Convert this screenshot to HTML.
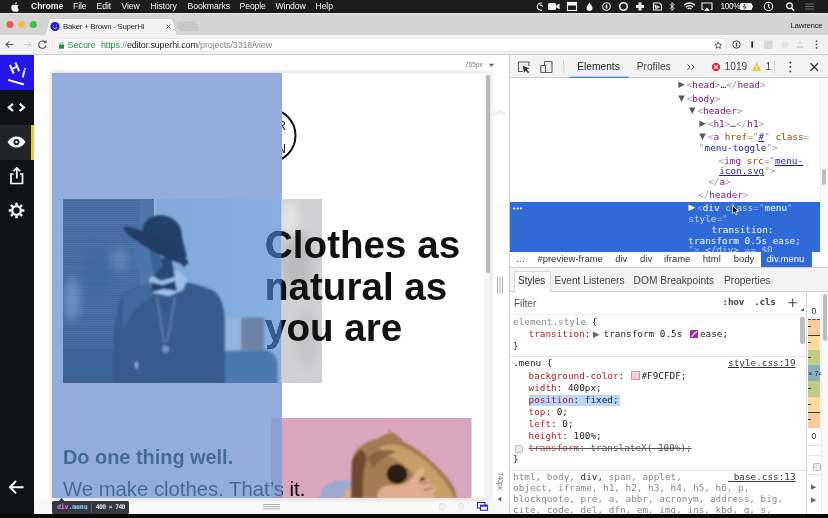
<!DOCTYPE html>
<html><head><meta charset="utf-8"><title>Baker + Brown - SuperHi</title>
<style>
*{box-sizing:border-box;margin:0;padding:0}
html,body{width:828px;height:518px;overflow:hidden;background:#fff;font-family:"Liberation Sans",sans-serif;}
.abs{position:absolute}
body>div{will-change:transform}
#menubar{position:absolute;left:0;top:0;width:828px;height:13px;background:#1c1c1c;color:#f4f4f4;font-size:8.700px;line-height:13px;white-space:nowrap;letter-spacing:-.12px}
#menubar span{position:absolute;top:0}
#tabstrip{position:absolute;left:0;top:13px;width:828px;height:22px;background:#d4d4d4;border-top:1px solid #e6e6e6}
#toolbar{position:absolute;left:0;top:35px;width:828px;height:20px;background:#f2f2f2;border-bottom:1px solid #d0d0d0}
#urlbar{position:absolute;left:54px;top:3px;width:672px;height:14px;background:#fff;border-radius:2px;border:1px solid #e6e6e6;font-size:8.950px;line-height:12px;white-space:nowrap}
#sidebar{position:absolute;left:0;top:55px;width:34px;height:460px;background:#111216}
#bottom{position:absolute;left:0;top:514px;width:828px;height:4px;background:#0a0a0a}
#preview{position:absolute;left:34px;top:55px;width:475px;height:459px;background:#fff;overflow:hidden}
#devtools{position:absolute;left:509px;top:55px;width:319px;height:459px;background:#fff;border-left:1px solid #cecece;overflow:hidden;font-size:9.5px}
.mono{font-family:"DejaVu Sans Mono","Liberation Mono",monospace}

.ui{font-size:10.200px;line-height:12px;white-space:nowrap}
.dom .ln,.st .ln{position:absolute;font-size:9.350px;line-height:11px;white-space:pre;color:#222}
.ln b{font-weight:normal}
.ln i{font-style:normal}
.ar{position:absolute;top:0;font-size:8.500px;color:#5a5a5a;font-family:"DejaVu Sans",sans-serif}
.ar.dn{font-size:8.500px}
.p{color:#a894a6}.t{color:#881280}.n{color:#994500}.v{color:#1a1aa6}.u{text-decoration:underline}
.sel{color:#fff !important}.sp{color:#8fb0e8}.sp2{color:#c4d5f3}
.r{color:#b81c1c}.g{color:#888 !important}.k{color:#222}
.bc span{position:absolute;top:198.300px;font-size:9.500px;line-height:11px;color:#333;white-space:nowrap}
</style></head><body>
<div id="menubar">
<svg class="abs" style="left:11px;top:1.5px" width="9" height="10" viewBox="0 0 18 20"><path fill="#f4f4f4" d="M13.2 10.6c0-2.3 1.9-3.4 2-3.5-1.1-1.6-2.8-1.8-3.4-1.8-1.4-.2-2.8.8-3.5.8s-1.900-.8-3.100-.800c-1.600 0-3.100.900-3.900 2.400-1.700 2.900-.4 7.200 1.200 9.500.8 1.200 1.700 2.400 3 2.400 1.200 0 1.700-.8 3.100-.8s1.900.8 3.100.8c1.300 0 2.100-1.200 2.900-2.300.9-1.300 1.300-2.600 1.300-2.700-.1 0-2.700-1-2.700-4zM10.800 3.600c.7-.8 1.100-1.900 1-3-1 0-2.100.6-2.800 1.400-.6.700-1.200 1.800-1 2.900 1.100.1 2.200-.5 2.800-1.300z"/></svg>
<span style="left:31px;font-weight:bold">Chrome</span>
<span style="left:73px">File</span>
<span style="left:96.500px">Edit</span>
<span style="left:121.500px">View</span>
<span style="left:150.500px">History</span>
<span style="left:187.500px">Bookmarks</span>
<span style="left:239.500px">People</span>
<span style="left:275.500px">Window</span>
<span style="left:315.500px">Help</span>
<svg class="abs" style="left:530px;top:0" width="298" height="13" viewBox="0 0 298 13" fill="none" stroke="#f0f0f0" stroke-width="1.100">
 <path d="M12 3.200a3.600 3.600 0 1 0 0 6.800M9.500 5.200a2 2 0 0 1 3 1.500"/>
 <rect x="18.500" y="3.500" width="7" height="6" rx="1" fill="#f0f0f0"/><path d="M26 6.500l3-2v4z" fill="#f0f0f0"/>
 <rect x="37.500" y="2.500" width="9" height="8" /><rect x="37.500" y="2.500" width="9" height="2.500" fill="#f0f0f0"/>
 <path d="M59.500 2.500c2 3 3 4 3 5.500a3 3 0 0 1-6 0c0-1.500 1-2.500 3-5.500z" fill="#f0f0f0" stroke="none"/>
 <circle cx="76.500" cy="6.500" r="3.800"/><path d="M76.500 4.500v4" stroke-width="1.600"/>
 <circle cx="93.500" cy="6.500" r="3.800" stroke-width="1.600"/>
 <path d="M108.500 2.500h3v2.500h2.500v3h-2.500v2.500h-3v-2.500h-2.500v-3h2.500z" fill="#f0f0f0" stroke="none"/>
 <path d="M123.500 3h6l2 2v5h-8z M125 5.500l4 1.500-3 1.500z"/>
 <path d="M140 4.200l4 4.300-2 2v-8l2 2-4 4.300" stroke-width=".9"/>
 <path d="M154 5.200a8 8 0 0 1 11 0M155.800 7.200a5.400 5.400 0 0 1 7.400 0M157.600 9a2.800 2.800 0 0 1 3.800 0" stroke-width="1.300"/>
 <path d="M173.500 9.500h-1.500v-6.500h10v6.500h-1.500"/><path d="M177 7.500l3 3.500h-6z" fill="#f0f0f0" stroke="none"/>
 <rect x="210.500" y="3.500" width="11" height="6" rx="1" fill="#e8e8e8"/><path d="M222.500 5.500v2" />
 <path d="M215 4l-1.500 3h2.500l-1.500 2.500" stroke="#1c1c1c" stroke-width=".8"/>
 <circle cx="238.500" cy="6.500" r="4.200"/><path d="M238.500 3.800v3l1.600 1.500"/>
 <circle cx="259.500" cy="5.800" r="2.800" stroke-width="1.300"/><path d="M261.500 8l2.500 2.700" stroke-width="1.500"/>
 <path d="M275 4h9M275 6.500h9M275 9h9" stroke="#6a6a6a" stroke-width="1"/>
</svg>
<span style="left:720.500px;font-size:8.200px;letter-spacing:-.3px">100%</span>
</div>
<div id="tabstrip">
 <svg class="abs" style="left:0;top:0" width="828" height="22" viewBox="0 0 828 22">
  <circle cx="10" cy="10.500" r="3.600" fill="#f05a52"/><circle cx="21.700" cy="10.500" r="3.600" fill="#f6b93a"/><circle cx="33.300" cy="10.500" r="3.600" fill="#3fc04a"/>
  <path d="M41 22c3.500 0 4.500-2 6-8l1.600-6.500c.6-2.300 1.400-3 3.400-3h118c2 0 2.800.7 3.400 3l1.600 6.500c1.500 6 2.500 8 6 8z" fill="#f2f2f2" stroke="#bdbdbd" stroke-width=".6"/>
  <path d="M179.500 8h14.500c1.200 0 1.800.4 2.200 1.600l1.600 5.400c.3 1-.2 1.500-1.200 1.500h-14.500c-1.200 0-1.800-.4-2.200-1.600l-1.600-5.400c-.3-1 .2-1.500 1.200-1.500z" fill="#c9c9c9" stroke="#b8b8b8" stroke-width=".5"/>
  <circle cx="55" cy="12.500" r="4.600" fill="#2419d6"/><path d="M53 13.200a2.200 2.200 0 0 0 4 0" stroke="#fff" stroke-width=".8" fill="none"/><circle cx="53.600" cy="11.300" r=".5" fill="#fff"/><circle cx="56.400" cy="11.300" r=".5" fill="#fff"/>
  <path d="M166.500 10.500l4 4m0-4l-4 4" stroke="#5a5a5a" stroke-width=".9"/>
 </svg>
 <span class="abs" style="left:63px;top:6.500px;font-size:7.900px;line-height:11px;color:#2a2a2a;white-space:nowrap;letter-spacing:-.28px">Baker + Brown - SuperHi</span>
 <span class="abs" style="left:790.500px;top:5.500px;font-size:7.900px;line-height:11px;color:#222;white-space:nowrap;letter-spacing:-.28px">Lawrence</span>
</div>
<div id="toolbar">
 <svg class="abs" style="left:0;top:0" width="54" height="20" viewBox="0 0 54 20" fill="none">
  <path d="M13.500 9.500h-7.500m3.200-3.200l-3.200 3.200 3.200 3.200" stroke="#5a5a5a" stroke-width="1.100"/>
  <path d="M23.500 9.500h7.500m-3.200-3.200l3.200 3.200-3.200 3.200" stroke="#d0d0d0" stroke-width="1.100"/>
  <path d="M45.200 7.200a3.700 3.700 0 1 0 .8 3.300" stroke="#5a5a5a" stroke-width="1.100"/><path d="M46.500 5v3.200h-3.200z" fill="#5a5a5a"/>
 </svg>
 <div id="urlbar">
  <svg class="abs" style="left:3.500px;top:2.500px" width="5.200" height="7" viewBox="0 0 6 8"><rect x="0" y="3.200" width="6" height="4.600" rx=".6" fill="#1e8e3e"/><path d="M1.300 3.500v-1.200a1.700 1.700 0 0 1 3.400 0v1.200" stroke="#1e8e3e" stroke-width=".9" fill="none"/></svg>
  <span class="abs" style="left:12.500px;top:0;color:#1e8e3e">Secure</span>
  <span class="abs" style="left:46px;top:0;letter-spacing:-.12px"><span style="color:#1e8e3e">https</span><span style="color:#888">://</span><span style="color:#222">editor.superhi.com</span><span style="color:#888">/projects/3318/view</span></span>
  <svg class="abs" style="left:658.500px;top:2.200px" width="8.500" height="8.500" viewBox="0 0 11 11"><path d="M5.500 1.200l1.300 2.900 3.100.3-2.300 2.100.7 3.100-2.800-1.600-2.800 1.600.7-3.100-2.300-2.100 3.100-.3z" fill="none" stroke="#444" stroke-width="1.100"/></svg>
 </div>
 <svg class="abs" style="left:728px;top:0" width="100" height="20" viewBox="0 0 100 20" fill="none">
  <circle cx="8.500" cy="9.500" r="3.700" stroke="#444" stroke-width="1"/><path d="M8.500 7.500v4" stroke="#444" stroke-width="1.200"/>
  <rect x="23.300" y="6.300" width="1.800" height="6.400" rx=".9" fill="#222"/>
  <rect x="36" y="5.500" width="8.500" height="8.500" fill="#d9d9d9"/>
  <circle cx="57" cy="9.500" r="3.500" fill="#e4e4e4"/>
  <path d="M69 11h6v2h-6z M72 6l2.500 3h-5z" fill="#dcdcdc"/>
  <circle cx="88.500" cy="6.200" r=".9" fill="#555"/><circle cx="88.500" cy="9.500" r=".9" fill="#555"/><circle cx="88.500" cy="12.800" r=".9" fill="#555"/>
 </svg>
</div>
<div id="sidebar">
 <div class="abs" style="left:0;top:0;width:34px;height:34.500px;background:#2216e8"></div>
 <svg class="abs" style="left:0;top:0" width="34" height="35" viewBox="0 0 34 35">
  <text x="14.500" y="17.600" text-anchor="middle" transform="rotate(-24 14.500 12.800)" font-family="Liberation Sans, sans-serif" font-weight="bold" font-size="13.500" fill="#fff">H</text>
  <text x="24" y="22.400" text-anchor="middle" transform="rotate(15 24 17.800)" font-family="Liberation Sans, sans-serif" font-weight="bold" font-size="13" fill="#fff">i</text>
  <path d="M8.800 25.100l14.400 4.100" stroke="#fff" stroke-width="2" stroke-linecap="round" fill="none"/>
 </svg>
 <svg class="abs" style="left:0;top:35px" width="34" height="35" viewBox="0 0 34 35" fill="none" stroke="#fff" stroke-width="2.200" >
  <path d="M13 13.800l-4.200 3.600 4.200 3.600M19.800 13.800l4.200 3.600-4.200 3.600"/>
 </svg>
 <div class="abs" style="left:0;top:70px;width:34px;height:35px;background:#22232b"></div>
 <div class="abs" style="left:31px;top:70px;width:3px;height:35px;background:#f2c230"></div>
 <svg class="abs" style="left:0;top:70px" width="34" height="35" viewBox="0 0 34 35" fill="none">
  <path d="M7.500 17c2.500-3.700 5.500-5.500 9-5.500s6.500 1.800 9 5.500c-2.500 3.700-5.500 5.500-9 5.500s-6.500-1.800-9-5.500z" fill="#fff"/>
  <circle cx="16.500" cy="17" r="3.100" fill="#22232b"/><circle cx="16.500" cy="17" r="1.200" fill="#fff"/>
 </svg>
 <svg class="abs" style="left:0;top:104px" width="34" height="35" viewBox="0 0 34 35" fill="none" stroke="#fff" stroke-width="1.700">
  <path d="M13.500 15h-2.500v9.500h11.500v-9.500h-2.500M16.800 19.500v-10.500M13.500 12.200l3.300-3.300 3.300 3.300"/>
 </svg>
 <svg class="abs" style="left:0;top:138px" width="34" height="35" viewBox="0 0 34 35" fill="none">
  <g transform="translate(16.500 17.500)" stroke="#fff">
   <circle r="4.300" stroke-width="2.300"/>
   <g stroke-width="2.400"><path d="M0-7.800v2.600M0 7.800v-2.600M-7.800 0h2.600M7.800 0h-2.600M-5.500-5.500l1.800 1.800M5.500 5.500l-1.800-1.800M-5.500 5.500l1.800-1.800M5.500-5.500l-1.800 1.800"/></g>
  </g>
 </svg>
 <svg class="abs" style="left:0;top:415px" width="34" height="35" viewBox="0 0 34 35" fill="none" stroke="#fff" stroke-width="2">
  <path d="M23.500 17.200h-13M16 11l-6 6.200 6 6.200"/>
 </svg>
</div>
<div id="preview">
 <!-- coords relative to (34,55) -->
 <span class="abs" style="left:431px;top:5.500px;font-size:6.500px;line-height:8px;color:#7d7d7d;white-space:nowrap">765px</span>
 <svg class="abs" style="left:454px;top:7.500px" width="7" height="5" viewBox="0 0 7 5"><path d="M.8.800h5.400l-2.700 3.200z" fill="#666"/></svg>
 <div class="abs" id="frame" style="left:18px;top:17.500px;width:438px;height:425px;background:#fff;box-shadow:0 0 5px rgba(0,0,0,.22);overflow:hidden">
  <!-- frame coords: origin (52,72.500) -->
  <!-- logo circle -->
  <svg class="abs" style="left:187px;top:31.500px" width="60" height="60" viewBox="0 0 60 60"><circle cx="30" cy="31.500" r="26.500" fill="#fff" stroke="#111" stroke-width="2"/>
   <text x="38" y="25.500" font-family="Liberation Sans, sans-serif" font-size="12.500" fill="#222">R</text>
   <text x="38" y="49" font-family="Liberation Sans, sans-serif" font-size="12.500" fill="#222">N</text>
   <text x="5" y="25" font-family="Liberation Sans, sans-serif" font-size="11" fill="#222">BAKE</text>
   <text x="26" y="36" font-family="Liberation Sans, sans-serif" font-size="9" fill="#222">+</text>
   <text x="3" y="48" font-family="Liberation Sans, sans-serif" font-size="11" fill="#222">BRO</text>
  </svg>
  <div class="abs" style="left:0;top:0;width:229.500px;height:425px;background:#f1c3d2"></div>
  <!-- pink photo: x 271..471.500 , y 418..498 -->
  <svg class="abs" style="left:219px;top:345.500px" width="200.500" height="80" viewBox="0 0 200.500 80">
   <defs><filter id="b2" x="-20%" y="-20%" width="140%" height="140%"><feGaussianBlur stdDeviation="1.100"/></filter>
   <pattern id="chk" width="3" height="3" patternUnits="userSpaceOnUse"><rect width="3" height="3" fill="#dfe5f3"/><rect width="1.500" height="3" fill="#6f86bd"/><rect width="3" height="1.200" fill="#5e76b0" opacity=".7"/></pattern></defs>
   <rect width="200.500" height="80" fill="#dca5be"/>
   <g filter="url(#b2)">
    <path d="M48 80l5-12 14-6 14 2 2 16z" fill="url(#chk)"/>
    <path d="M72 80l4-10 8-2v12z" fill="#d9a98a"/>
    <path d="M80 80L81 42c2-7 5-11 9-14 5-4 11-6 17-7.500 4-3 8-5 12-5l-3-5 6 5c4 1 7 4 10.400 8.200 5 2 10 5 14.400 8.300 5 3.500 10 7.500 14.200 12 4.500 4 9 8 12.500 12.500 4 4.500 8 9.500 10.200 14.500l2 9z" fill="#a57a52"/>
    <path d="M108 30c10-6 22-4 34 4 12 8 24 18 32 30 4 6 8 12 9 16h-30c-2-14-10-26-22-34-8-6-16-10-23-16z" fill="#c99d68"/>
    <path d="M80 80L81 44c2-6 5-10 9-12 4 2 6 6 5 12-3 10-4 22-3 36z" fill="#6f4a2e"/>
    <path d="M96 40c8-8 20-10 30-6-10 2-18 8-24 16z" fill="#8a623f"/>
    <ellipse cx="126" cy="56" rx="10.500" ry="10" fill="#2b1b14"/>
    <path d="M146 58l8 2 2 6-6 4-6-5z" fill="#3a261c"/>
    <path d="M106 80c0-8 6-13 14-13 6 1 12 0 18-4l10-12c3-3 6-1 5 3l-5 10 8-3c4 0 4 4 1 6l6 1c3 2 2 6-1 7l2 5z" fill="#e0ae8c"/>
    <path d="M150 66l8-2M152 72l10-2" stroke="#7a4c36" stroke-width="1.200" fill="none"/>
   </g>
  </svg>
  <!-- text -->
  <div class="abs" style="left:11px;top:372px;font-weight:bold;font-size:19.900px;line-height:24px;color:#050505;white-space:nowrap">Do one thing well.</div>
  <div class="abs" style="left:11px;top:404.500px;font-size:20.300px;line-height:24px;color:#050505;white-space:nowrap">We make clothes. That’s it.</div>
  <!-- devtools highlight overlay -->
  <div class="abs" style="left:0;top:0;width:229.500px;height:425px;background:rgba(100,160,225,.66)"></div>
  <!-- man photo (final colours) : x 63..322 , y 198.700..383.500 -->
  <svg class="abs" style="left:11px;top:126.200px" width="259" height="184.800" viewBox="0 0 259 184.800">
   <defs>
    <filter id="b1" x="-20%" y="-20%" width="140%" height="140%"><feGaussianBlur stdDeviation=".9"/></filter>
    <filter id="b3" x="-30%" y="-30%" width="160%" height="160%"><feGaussianBlur stdDeviation="5"/></filter>
    <linearGradient id="wall" x1="0" x2="1"><stop offset="0" stop-color="#7ea8d9"/><stop offset="1" stop-color="#86aede"/></linearGradient>
    <linearGradient id="win" x1="0" y1="0" x2="0" y2="1"><stop offset="0" stop-color="#42699d"/><stop offset=".6" stop-color="#40679a"/><stop offset="1" stop-color="#3b6193"/></linearGradient>
    <pattern id="blinds" width="4" height="2.200" patternUnits="userSpaceOnUse"><rect width="4" height="1" fill="#6b97c8" opacity=".3"/></pattern>
    <clipPath id="cl"><rect x="0" y="0" width="218.500" height="184.800"/></clipPath>
   </defs>
   <rect width="259" height="184.800" fill="#d0d0d3"/>
   <ellipse cx="234" cy="62" rx="16" ry="30" fill="#bcbcbe" filter="url(#b3)"/>
   <ellipse cx="244" cy="140" rx="12" ry="30" fill="#c6c6c8" filter="url(#b3)"/>
   <ellipse cx="226" cy="20" rx="10" ry="18" fill="#e2e2e2" filter="url(#b3)"/>
   <g clip-path="url(#cl)">
    <rect width="218.500" height="184.800" fill="url(#wall)"/>
    <rect x="0" y="0" width="78" height="184.800" fill="url(#win)"/>
    <rect x="0" y="0" width="78" height="150" fill="url(#blinds)"/>
    <ellipse cx="56" cy="60" rx="9" ry="11" fill="#86add6" opacity=".4" filter="url(#b3)"/>
    <ellipse cx="9" cy="100" rx="8" ry="22" fill="#86b0dc" opacity=".55" filter="url(#b3)"/>
    <ellipse cx="34" cy="75" rx="14" ry="30" fill="#3e6a9e" opacity=".55" filter="url(#b3)"/>
    <rect x="77" y="0" width="14.500" height="184.800" fill="#4d77a9"/>
    <rect x="91" y="0" width="1.600" height="184.800" fill="#93b8e2"/>
    <rect x="0" y="150" width="77" height="34.800" fill="#41699a" opacity=".3"/>
    <g filter="url(#b1)">
     <path d="M159 151.500h46c5 2 8 6 9.500 12v22h-55.500z" fill="#4b78ad"/>
     <rect x="160" y="118.500" width="19" height="33" fill="#93b4dc"/>
     <rect x="178" y="118.500" width="23" height="33" fill="#6d82a8"/>
     <!-- body -->
     <path d="M50 185V146c1-20 4-38 10-50 6-6 16-9 28-12l30-2c14 3 26 6 33 10 8 6 11 20 11 32v61z" fill="#365d8e"/>
     <path d="M60 97c6-6 16-9 27-12l3 12c-10 6-20 12-30 34z" fill="#456e9f" opacity=".8"/>
     <!-- collar -->
     <path d="M86 80l6-6 24-2 8 9-4 10-14 6-16-3z" fill="#9dc0ea"/>
     <!-- neck shadow -->
     <path d="M86 60l22-2 4 20-14 4-10-6z" fill="#284a78"/>
     <!-- bow tie -->
     <path d="M88 83l11 3 13-4 2 10-13-2-12 3z" fill="#23426f"/>
     <!-- face -->
     <path d="M72 42c6-2 16-2 22 2l4 20-6 12-12 0-6-6-2-8-3-5 3-5z" fill="#4a76a8"/>
     <path d="M86 44l8 0 6 22-8 10-4-14z" fill="#3a6294"/>
     <!-- hat -->
     <ellipse cx="99" cy="34" rx="20" ry="17.500" transform="rotate(18 99 34)" fill="#223f6b"/>
     <path d="M80 30l36-4 8 32-12 2-22-14z" fill="#223f6b"/>
     <ellipse cx="93" cy="46.500" rx="37" ry="6.500" transform="rotate(29 93 46.500)" fill="#213d68"/>
     <path d="M118 50l6 12-3 7-6-9z" fill="#213d68"/>
     <!-- chain -->
     <path d="M94 98l7 46M112 98l-8 46" stroke="#7fa3cf" stroke-width=".8" fill="none"/>
     <circle cx="102.500" cy="150" r="3.600" fill="#7196c4"/>
     <rect x="72" y="163" width="3" height="6" fill="#86aad4"/>
    </g>
   </g>
  </svg>
  <div class="abs" style="left:213px;top:151.500px;font-weight:bold;font-size:38.600px;line-height:41.600px;color:#111;letter-spacing:0;white-space:nowrap">Clothes as<br>natural as<br>you are</div>
  <div class="abs" style="left:213px;top:151.500px;font-weight:bold;font-size:38.600px;line-height:41.600px;color:#345c92;clip-path:inset(0 calc(100% - 16.500px) 0 0);letter-spacing:0;white-space:nowrap">Clothes as<br>natural as<br>you are</div>
  <!-- scrollbar -->
  <div class="abs" style="left:432px;top:0;width:6px;height:425px;background:#f4f4f4"></div>
  <div class="abs" style="left:433.500px;top:2.500px;width:4.500px;height:198px;background:#b9b9b9;border-radius:2px"></div>
 </div>
 <span class="abs" style="left:459px;top:53.500px;font-size:6px;line-height:8px;color:#cfcfcf;white-space:nowrap">] iPa</span>
 <svg class="abs" style="left:462px;top:220px" width="8" height="20" viewBox="0 0 8 20"><path d="M1.500 1.500v17M4 1.500v17M6.500 1.500v17" stroke="#9a9a9a" stroke-width=".8"/></svg>
 <span class="abs" style="left:456px;top:422px;width:20px;font-size:6.500px;line-height:8px;color:#666;white-space:nowrap;transform:rotate(90deg);transform-origin:center;text-align:center">740px</span>
 <svg class="abs" style="left:462.500px;top:440.500px" width="5" height="6" viewBox="0 0 5 6"><path d="M4.200.8v4.400l-3.400-2.200z" fill="#555"/></svg>
 <!-- bottom bar -->
 <div class="abs" style="left:0;top:444px;width:475px;height:15px;background:#f8f8f8;z-index:-1"></div>
 <svg class="abs" style="left:228px;top:448px" width="20" height="8" viewBox="0 0 20 8"><path d="M1 1.500h17M1 3.700h17M1 5.900h17" stroke="#9a9a9a" stroke-width=".8"/></svg>
 <svg class="abs" style="left:400px;top:445px" width="60" height="13" viewBox="0 0 60 13" fill="none">
  <circle cx="8" cy="6.500" r="3" stroke="#dedede" stroke-width="1"/><path d="M8 4.800v2" stroke="#dedede" stroke-width=".8"/>
  <circle cx="27" cy="6.500" r="3" stroke="#e6e6e6" stroke-width="1"/><path d="M26.200 5v3M27.800 5v3" stroke="#e2e2e2" stroke-width=".8"/>
  <rect x="43.500" y="2.500" width="7.500" height="5.500" stroke="#2a2ab8" stroke-width="1.100"/><rect x="46.500" y="5.200" width="7" height="5" fill="#fff" stroke="#2a2ab8" stroke-width="1.100"/><rect x="46.500" y="5.200" width="7" height="1.500" fill="#2a2ab8"/>
 </svg>
 <!-- tooltip -->
 <div class="abs" style="left:18px;top:446.300px;width:77px;height:12.700px;background:#333842;border-radius:1.500px"></div>
 <svg class="abs" style="left:23px;top:441.500px" width="10" height="6" viewBox="0 0 10 6"><path d="M0 6l4.500-5 4.500 5z" fill="#333842"/></svg>
 <span class="abs mono" style="left:23px;top:448.300px;font-size:6.700px;line-height:9px;white-space:nowrap;font-weight:bold;letter-spacing:-.22px"><span style="color:#ee78e6">div</span><span style="color:#8ed3fb">.menu</span></span>
 <span class="abs" style="left:57.300px;top:448px;width:1px;height:9.500px;background:#5a5f6a"></span>
 <span class="abs mono" style="left:61.800px;top:448.300px;font-size:6.400px;line-height:9px;color:#dcdcdc;white-space:nowrap;font-weight:bold;letter-spacing:-.62px">400 × 740</span>
</div>
<div id="devtools">
 <!-- origin (510,55) -->
 <div class="abs" style="left:0;top:0;width:318px;height:23px;background:#f3f3f3;border-bottom:1px solid #cdcdcd"></div>
 <svg class="abs" style="left:0;top:0" width="318" height="23" viewBox="0 0 318 23" fill="none">
  <path d="M13 16.500h-4.500v-9.500h10.500v4" stroke="#5a5a5a" stroke-width="1.100"/><path d="M12.800 10.800l6.800 2.600-2.800 1.200 2.300 2.700-1.100.9-2.300-2.700-1.600 2.400z" fill="#333"/>
  <rect x="34.500" y="6.500" width="7.500" height="11" rx=".8" stroke="#5a5a5a" stroke-width="1.100"/><rect x="30.800" y="10.500" width="4.800" height="7" rx=".6" fill="#f3f3f3" stroke="#5a5a5a" stroke-width="1.100"/>
  <path d="M53.500 5v13" stroke="#cfcfcf" stroke-width="1"/>
  <rect x="59.300" y="21.700" width="59.500" height="1.500" fill="#3e82e5"/>
  <path d="M177.500 9.500l2.600 2.600-2.600 2.600M181.500 9.500l2.600 2.600-2.600 2.600" stroke="#444" stroke-width="1"/>
  <circle cx="206" cy="12" r="4.200" fill="#e0353c"/><path d="M204.300 10.300l3.400 3.400m0-3.400l-3.400 3.400" stroke="#fff" stroke-width="1.100"/>
  <path d="M246.700 7.200l4.700 8.500h-9.400z" fill="#f3c52c"/><path d="M246.700 10v3.200M246.700 14v1" stroke="#fff" stroke-width="1"/>
  <path d="M264.500 5v13" stroke="#d4d4d4" stroke-width="1"/>
  <circle cx="280.300" cy="7.500" r="1" fill="#444"/><circle cx="280.300" cy="12" r="1" fill="#444"/><circle cx="280.300" cy="16.500" r="1" fill="#444"/>
  <path d="M300.500 8.300l7.400 7.400m0-7.400l-7.400 7.400" stroke="#333" stroke-width="1.300"/>
 </svg>
 <span class="abs ui" style="left:67.300px;top:6px;color:#222">Elements</span>
 <span class="abs ui" style="left:126.700px;top:6px;color:#444">Profiles</span>
 <span class="abs ui" style="left:214.600px;top:6px;color:#444">1019</span>
 <span class="abs ui" style="left:255.500px;top:6px;color:#444">1</span>

 <!-- DOM tree -->
 <div class="abs" style="left:0;top:147.400px;width:310px;height:49.800px;background:#2f6ad6"></div>
 <div class="dom mono">
  <span class="ln" style="left:176.700px;top:24.2px"><i class="ar" style="left:-8.500px">▶</i><b class="p">&lt;</b><b class="t">head</b><b class="p">&gt;</b>…<b class="p">&lt;/</b><b class="t">head</b><b class="p">&gt;</b></span>
  <span class="ln" style="left:176.700px;top:37.7px"><i class="ar dn" style="left:-8.500px">▼</i><b class="p">&lt;</b><b class="t">body</b><b class="p">&gt;</b></span>
  <span class="ln" style="left:187.400px;top:50.3px"><i class="ar dn" style="left:-8.500px">▼</i><b class="p">&lt;</b><b class="t">header</b><b class="p">&gt;</b></span>
  <span class="ln" style="left:197.800px;top:63.4px"><i class="ar" style="left:-8.500px">▶</i><b class="p">&lt;</b><b class="t">h1</b><b class="p">&gt;</b>…<b class="p">&lt;/</b><b class="t">h1</b><b class="p">&gt;</b></span>
  <span class="ln" style="left:197.800px;top:76.4px"><i class="ar dn" style="left:-8.500px">▼</i><b class="p">&lt;</b><b class="t">a</b> <b class="n">href</b><b class="p">="</b><b class="v u">#</b><b class="p">"</b> <b class="n">class</b><b class="p">=</b></span>
  <span class="ln" style="left:188.900px;top:87.4px"><b class="p">"</b><b class="v">menu-toggle</b><b class="p">"&gt;</b></span>
  <span class="ln" style="left:208.600px;top:99.5px"><b class="p">&lt;</b><b class="t">img</b> <b class="n">src</b><b class="p">="</b><b class="v u">menu-</b></span>
  <span class="ln" style="left:209.200px;top:110.2px"><b class="v u">icon.svg</b><b class="p">"&gt;</b></span>
  <span class="ln" style="left:198.200px;top:121px"><b class="p">&lt;/</b><b class="t">a</b><b class="p">&gt;</b></span>
  <span class="ln" style="left:188px;top:133.8px"><b class="p">&lt;/</b><b class="t">header</b><b class="p">&gt;</b></span>
  <span class="ln sel" style="left:187px;top:146.8px"><i class="ar" style="left:-8.500px;color:#fff">▶</i><b class="sp">&lt;</b>div <b class="sp2">class</b><b class="sp">="</b>menu<b class="sp">"</b></span>
  <span class="ln sel" style="left:178.300px;top:158.1px"><b class="sp2">style</b><b class="sp">="</b></span>
  <span class="ln sel" style="left:201.500px;top:169.1px">transition:</span>
  <span class="ln sel" style="left:178.300px;top:179.8px">transform 0.5s ease;</span>
  <span class="ln sel" style="left:178.300px;top:188.8px"><b class="sp">"&gt;</b><b class="sp2">…&lt;/div&gt; == $0</b></span>
  <span class="ln sel" style="left:2px;top:149.300px;letter-spacing:-.8px;color:#dbe6fa;font-size:7px">•••</span>
 </div>
<svg class="abs" style="left:221.500px;top:149.500px" width="8" height="11" viewBox="0 0 8 11"><path d="M.6.600v8.200l2-1.800 1.300 3 1.300-.6-1.300-2.900h2.700z" fill="#111" stroke="#fff" stroke-width=".7"/></svg>
 <!-- DOM scrollbar -->
 <div class="abs" style="left:310px;top:24px;width:8px;height:173px;background:#fafafa;border-left:1px solid #ededed"></div>
 <div class="abs" style="left:312px;top:114px;width:4px;height:15.500px;background:#bdbdbd;border-radius:2px"></div>

 <!-- breadcrumbs -->
 <div class="abs" style="left:0;top:197px;width:318px;height:16px;background:#fff;border-bottom:1px solid #cfcfcf"></div>
 <div class="abs" style="left:251px;top:197px;width:51px;height:15px;background:#2f6ad6"></div>
 <div class="bc">
  <span style="left:6px;letter-spacing:.3px">...</span>
  <span style="left:27.400px">#preview-frame</span>
  <span style="left:105.200px">div</span>
  <span style="left:130px">div</span>
  <span style="left:154px">iframe</span>
  <span style="left:192.800px">html</span>
  <span style="left:223.700px">body</span>
  <span style="left:256.500px;color:#fff">div.menu</span>
 </div>
 <!-- styles tabs -->
 <div class="abs" style="left:0;top:213px;width:318px;height:24px;background:#f3f3f3;border-bottom:1px solid #cdcdcd"></div>
 <div class="abs" style="left:3.500px;top:216px;width:37px;height:21px;background:#fff;border:1px solid #dadada;border-bottom:none"></div>
 <span class="abs ui" style="left:8px;top:220px;color:#222;font-size:10px">Styles</span>
 <span class="abs ui" style="left:44.400px;top:220px;color:#444">Event Listeners</span>
 <span class="abs ui" style="left:123.600px;top:220px;color:#444">DOM Breakpoints</span>
 <span class="abs ui" style="left:214px;top:220px;color:#444">Properties</span>
 <!-- filter row -->
 <div class="abs" style="left:0;top:258.500px;width:296px;height:1px;background:#f0f0f0"></div>
 <span class="abs ui" style="left:4px;top:242.500px;color:#555;font-size:10px">Filter</span>
 <span class="abs mono" style="left:212.500px;top:241.300px;font-size:9.350px;line-height:11px;color:#444;font-weight:bold;white-space:nowrap;letter-spacing:-.2px">:hov</span>
 <span class="abs mono" style="left:244px;top:241.300px;font-size:9.350px;line-height:11px;color:#444;font-weight:bold;white-space:nowrap;letter-spacing:-.2px">.cls</span>
 <svg class="abs" style="left:277px;top:242px" width="18" height="16" viewBox="0 0 18 16"><path d="M5.700 1.500v8.400M1.500 5.700h8.400" stroke="#444" stroke-width="1.100"/><path d="M17 10.800v3.300h-3.300z" fill="#555"/></svg>
 <!-- styles scrollbar -->
 <div class="abs" style="left:290.300px;top:262px;width:4.500px;height:27px;background:#bdbdbd;border-radius:2px"></div>
 <!-- sidebar split -->
 <div class="abs" style="left:295.800px;top:238px;width:1px;height:221px;background:#d6d6d6"></div>

 <!-- Styles content -->
 <div class="abs" style="left:0;top:300.500px;width:296px;height:1px;background:#e4e4e4"></div>
 <div class="abs" style="left:0;top:414.500px;width:296px;height:1px;background:#e4e4e4"></div>
 <div class="abs" style="left:18.600px;top:340px;width:91.500px;height:10.500px;background:#b9d6fb"></div>
 <div class="st mono">
  <span class="ln g" style="left:3px;top:260.7px">element.style <b class="k">{</b></span>
  <span class="ln" style="left:18.600px;top:273px"><b class="r">transition</b>:<i class="ar" style="position:static;color:#666;font-size:8.500px;margin:0 4px 0 2.500px">▶</i>transform 0.5s <svg width="8.500" height="8.500" viewBox="0 0 9 9" style="vertical-align:-1px;margin:0 1.500px 0 2px"><rect width="9" height="9" rx="1" fill="#9c27b0"/><path d="M1.500 7c2.500 0 1.500-4.500 6-5" stroke="#fff" stroke-width="1.200" fill="none"/></svg>ease;</span>
  <span class="ln" style="left:3px;top:284.5px">}</span>
  <span class="ln" style="left:3px;top:302.1px">.menu {</span>
  <span class="ln u" style="left:218px;top:302.1px;color:#333">style.css:19</span>
  <span class="ln" style="left:18.600px;top:314.5px"><b class="r">background-color</b>: <i style="display:inline-block;width:9px;height:9px;background:#F9CFDF;border:1px solid #b9a0a8;vertical-align:-1.500px;margin:0 1.500px 0 1px"></i>#F9CFDF;</span>
  <span class="ln" style="left:18.600px;top:326.7px"><b class="r">width</b>: 400px;</span>
  <span class="ln" style="left:18.600px;top:338.7px"><b class="r">position</b>: fixed;</span>
  <span class="ln" style="left:18.600px;top:350.7px"><b class="r">top</b>: 0;</span>
  <span class="ln" style="left:18.600px;top:362.7px"><b class="r">left</b>: 0;</span>
  <span class="ln" style="left:18.600px;top:374.7px"><b class="r">height</b>: 100%;</span>
  <span class="ln" style="left:18.600px;top:386.7px;text-decoration:line-through;color:#555"><b class="r" style="color:#b04a4a">transform</b>: translateX(-100%);</span>
  <span class="ln" style="left:3px;top:398.4px">}</span>
  <span class="ln g" style="left:3px;top:416.2px">html, body, <b class="k">div,</b> span, applet,</span>
  <span class="ln u" style="left:218px;top:416.2px;color:#333">_base.css:13</span>
  <span class="ln g" style="left:3px;top:427.2px">object, iframe, h1, h2, h3, h4, h5, h6, p,</span>
  <span class="ln g" style="left:3px;top:438.3px">blockquote, pre, a, abbr, acronym, address, big,</span>
  <span class="ln g" style="left:3px;top:448.9px">cite, code, del, dfn, em, img, ins, kbd, q, s,</span>
 </div>
 <div class="abs" style="left:5px;top:390px;width:8px;height:8px;background:#e9e9e9;border:1px solid #bdbdbd;border-radius:1.500px"></div>

 <!-- right sidebar (box model) -->
 <div class="abs" style="left:297.500px;top:238px;width:21px;height:221px;background:#fff"></div>
 <div class="abs" style="left:297.500px;top:264px;width:12.500px;height:16px;background:#f8cb9c;border-top:1px dashed #444"></div>
 <div class="abs" style="left:297.500px;top:280px;width:12.500px;height:15px;background:#fbdc9d;border-top:1px solid #3a3a3a"></div>
 <div class="abs" style="left:297.500px;top:294.600px;width:12.500px;height:15.200px;background:#c1cd87"></div>
 <div class="abs" style="left:297.500px;top:309.700px;width:12.500px;height:16.500px;background:#88b1c0"></div>
 <div class="abs" style="left:297.500px;top:326.200px;width:12.500px;height:15.500px;background:#c1cd87"></div>
 <div class="abs" style="left:297.500px;top:341.700px;width:12.500px;height:15.300px;background:#fbdc9d"></div>
 <div class="abs" style="left:297.500px;top:357px;width:12.500px;height:15.500px;background:#f8cb9c;border-top:1px solid #3a3a3a"></div>
 <span class="abs ui" style="left:301.500px;top:250.200px;font-size:8.500px;color:#222">0</span>
 <span class="abs ui" style="left:301.500px;top:375px;font-size:8.500px;color:#222">0</span>
 <span class="abs ui" style="left:298px;top:313px;font-size:7.500px;color:#223">× 74</span>
 <span class="abs" style="left:298px;top:271px;width:2.500px;height:1px;background:#444"></span>
 <span class="abs" style="left:298px;top:287px;width:2.500px;height:1px;background:#444"></span>
 <span class="abs" style="left:298px;top:302px;width:2.500px;height:1px;background:#444"></span>
 <span class="abs" style="left:298px;top:333px;width:2.500px;height:1px;background:#444"></span>
 <span class="abs" style="left:298px;top:349px;width:2.500px;height:1px;background:#444"></span>
 <span class="abs" style="left:298px;top:364px;width:2.500px;height:1px;background:#444"></span>
 <div class="abs" style="left:297.500px;top:389.500px;width:21px;height:1px;background:#e2e2e2"></div>
 <div class="abs" style="left:297.500px;top:400px;width:21px;height:1px;background:#e2e2e2"></div>
 <div class="abs" style="left:297.500px;top:419px;width:21px;height:1px;background:#e2e2e2"></div>
 <div class="abs" style="left:303px;top:408px;width:8px;height:8px;background:#e9e9e9;border:1px solid #bdbdbd;border-radius:1.500px"></div>
 <span class="abs" style="left:300.500px;top:427px;font-size:7px;line-height:9px;color:#666">▶</span>
 <span class="abs" style="left:300.500px;top:440px;font-size:7px;line-height:9px;color:#666">▶</span>
 <!-- outer right scrollbar -->
 <div class="abs" style="left:310.500px;top:238px;width:8px;height:221px;background:#fafafa;border-left:1px solid #ececec"></div>
 <div class="abs" style="left:312.600px;top:239px;width:4px;height:47px;background:#bdbdbd;border-radius:2px"></div>
</div>
<div id="bottom"></div>
</body></html>
